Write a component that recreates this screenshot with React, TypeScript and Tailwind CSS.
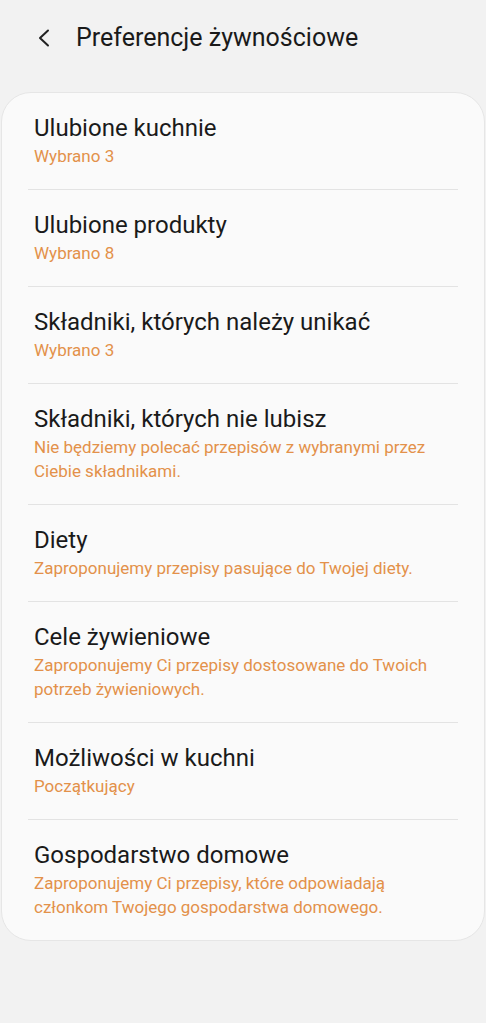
import React from "react";

const items: { title: string; sub: string }[] = [
  { title: "Ulubione kuchnie", sub: "Wybrano 3" },
  { title: "Ulubione produkty", sub: "Wybrano 8" },
  { title: "Składniki, których należy unikać", sub: "Wybrano 3" },
  {
    title: "Składniki, których nie lubisz",
    sub: "Nie będziemy polecać przepisów z wybranymi przez Ciebie składnikami.",
  },
  { title: "Diety", sub: "Zaproponujemy przepisy pasujące do Twojej diety." },
  {
    title: "Cele żywieniowe",
    sub: "Zaproponujemy Ci przepisy dostosowane do Twoich potrzeb żywieniowych.",
  },
  { title: "Możliwości w kuchni", sub: "Początkujący" },
  {
    title: "Gospodarstwo domowe",
    sub: "Zaproponujemy Ci przepisy, które odpowiadają członkom Twojego gospodarstwa domowego.",
  },
];

export default function App() {
  return (
    <div
      className="min-h-[1023px] w-full bg-[#f2f2f2]"
      style={{ fontFamily: "Roboto, 'Noto Sans', sans-serif" }}
    >
      <div className="flex h-[76px] items-center">
        <div className="ml-[37px] flex h-[18px] w-[13px] items-center">
          <svg width="13" height="18" viewBox="0 0 13 18" fill="none">
            <polyline
              points="11,1.5 3,9 11,16.5"
              stroke="#222"
              strokeWidth="2"
              strokeLinecap="round"
              strokeLinejoin="round"
            />
          </svg>
        </div>
        <h1 className="ml-[26px] text-[25px] leading-[30px] text-[#1a1a1a]">
          Preferencje żywnościowe
        </h1>
      </div>
      <div className="mx-px mt-4 rounded-[30px] border border-[#e6e6e6] bg-[#fafafa]">
        {items.map((it, i) => (
          <div key={i}>
            {i > 0 && <div className="mx-[26px] h-px bg-[#e3e3e3]" />}
            <div className="px-[32px] pt-5 pb-[21px]">
              <div className="text-[24px] leading-[31px] text-[#1a1a1a]">
                {it.title}
              </div>
              <div className="pr-[20px] text-[17px] leading-[24px] text-[#e3914a]">
                {it.sub}
              </div>
            </div>
          </div>
        ))}
      </div>
    </div>
  );
}
